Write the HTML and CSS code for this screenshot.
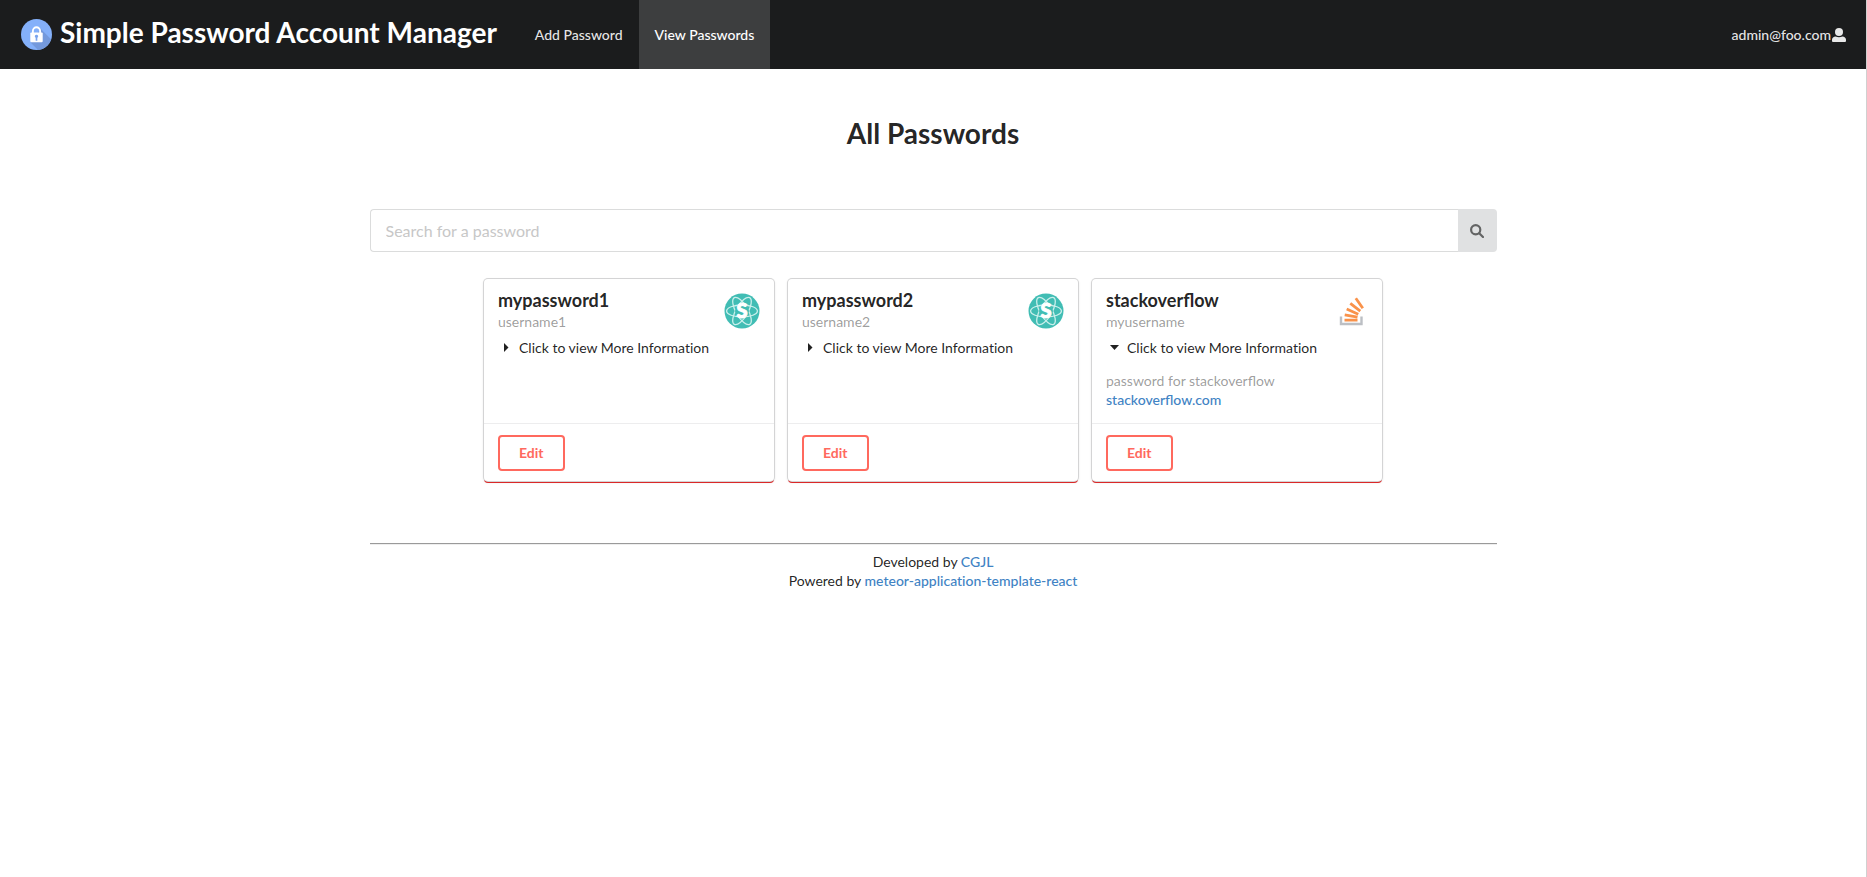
FILE: index.html
```html
<!DOCTYPE html>
<html lang="en">
<head>
<meta charset="utf-8">
<title>Simple Password Account Manager</title>
<link rel="stylesheet" href="styles.css">
</head>
<body>
<nav class="navbar">
  <a class="brand" href="#">
    <svg class="brand-logo" viewBox="0 0 30 30" aria-hidden="true">
      <defs><clipPath id="disc"><circle cx="15" cy="15" r="15"/></clipPath></defs>
      <circle cx="15" cy="15" r="15" fill="#84b0fa"/>
      <path d="M19 9.500 32 22.500V32H18.500L9.500 23z" fill="#7499dc" clip-path="url(#disc)"/>
      <path d="M11.500 14v-2.500a3.500 3.500 0 0 1 7 0V14" fill="none" stroke="#fff" stroke-width="1.800"/>
      <rect x="9" y="13" width="12" height="9.500" rx="1" fill="#fff"/>
      <path d="M15 15.200a1.600 1.600 0 0 1 .8 3v2.800h-1.600v-2.800a1.600 1.600 0 0 1 .8-3z" fill="#7aa4ee"/>
    </svg>
    <h1 class="brand-name">Simple Password Account Manager</h1>
  </a>
  <a class="nav-item" href="#">Add Password</a>
  <a class="nav-item active" href="#">View Passwords</a>
  <a class="nav-item user" href="#">admin@foo.com<svg class="user-icon" viewBox="0 0 14 14" aria-hidden="true"><circle cx="7" cy="4" r="4"/><path d="M0 13v-1.200C0 9.800 1.600 8.500 3.600 8.500c1 .5 2.100.8 3.400.8s2.400-.3 3.400-.8c2 0 3.600 1.300 3.600 3.300V13a1 1 0 0 1-1 1H1a1 1 0 0 1-1-1z"/></svg></a>
</nav>
<main class="container">
  <h2 class="page-title">All Passwords</h2>
  <form class="search">
    <input class="search-input" type="text" placeholder="Search for a password" aria-label="Search for a password">
    <button class="search-button" type="button" aria-label="Search">
      <svg class="search-icon" viewBox="0 0 14 14" aria-hidden="true"><circle cx="5.700" cy="5.700" r="4.600"/><path d="M9.200 9.200 13 13"/></svg>
    </button>
  </form>
  <section class="cards">
    <article class="card">
      <div class="content">
        <div class="head">
          <div>
            <h3 class="name">mypassword1</h3>
            <p class="meta">username1</p>
          </div>
          <svg class="logo" viewBox="0 0 36 36" aria-hidden="true">
            <circle cx="18" cy="18" r="17.500" fill="#41bdb4"/>
            <g fill="none" stroke="#c9efeb" stroke-width="1.300">
              <ellipse cx="18" cy="18" rx="15.400" ry="6"/>
              <ellipse cx="18" cy="18" rx="15.400" ry="6" transform="rotate(60 18 18)"/>
              <ellipse cx="18" cy="18" rx="15.400" ry="6" transform="rotate(120 18 18)"/>
            </g>
            <circle cx="18" cy="18" r="7" fill="#41bdb4"/>
            <text x="18" y="25" text-anchor="middle" class="logo-letter">S</text>
          </svg>
        </div>
        <button class="toggle" type="button"><svg class="caret" viewBox="0 0 14 14" aria-hidden="true"><path d="M6 2v9l4.500-4.500z"/></svg>Click to view More Information</button>
      </div>
      <div class="extra"><button class="edit" type="button">Edit</button></div>
    </article>
    <article class="card">
      <div class="content">
        <div class="head">
          <div>
            <h3 class="name">mypassword2</h3>
            <p class="meta">username2</p>
          </div>
          <svg class="logo" viewBox="0 0 36 36" aria-hidden="true">
            <circle cx="18" cy="18" r="17.500" fill="#41bdb4"/>
            <g fill="none" stroke="#c9efeb" stroke-width="1.300">
              <ellipse cx="18" cy="18" rx="15.400" ry="6"/>
              <ellipse cx="18" cy="18" rx="15.400" ry="6" transform="rotate(60 18 18)"/>
              <ellipse cx="18" cy="18" rx="15.400" ry="6" transform="rotate(120 18 18)"/>
            </g>
            <circle cx="18" cy="18" r="7" fill="#41bdb4"/>
            <text x="18" y="25" text-anchor="middle" class="logo-letter">S</text>
          </svg>
        </div>
        <button class="toggle" type="button"><svg class="caret" viewBox="0 0 14 14" aria-hidden="true"><path d="M6 2v9l4.500-4.500z"/></svg>Click to view More Information</button>
      </div>
      <div class="extra"><button class="edit" type="button">Edit</button></div>
    </article>
    <article class="card">
      <div class="content">
        <div class="head">
          <div>
            <h3 class="name">stackoverflow</h3>
            <p class="meta">myusername</p>
          </div>
          <svg class="logo" viewBox="0 0 36 36" aria-hidden="true">
            <path d="M9 23.500v7.500h20.500v-7.500" fill="none" stroke="#bcbfc4" stroke-width="2.400"/>
            <path d="M12.500 27.200h13M12.700 21.800l12.800 2.400M14.700 16l11.600 5.200M18.300 10.300l10 7.800M23.800 5.300l7 10" fill="none" stroke="#f9924a" stroke-width="2.800"/>
          </svg>
        </div>
        <button class="toggle" type="button"><svg class="caret" viewBox="0 0 14 14" aria-hidden="true"><path d="M4 4h9L8.500 9z"/></svg>Click to view More Information</button>
        <div class="details">
          <p class="meta">password for stackoverflow</p>
          <a class="link" href="#">stackoverflow.com</a>
        </div>
      </div>
      <div class="extra"><button class="edit" type="button">Edit</button></div>
    </article>
  </section>
  <footer class="footer">
    <p>Developed by <a class="link" href="#">CGJL</a></p>
    <p>Powered by <a class="link" href="#">meteor-application-template-react</a></p>
  </footer>
</main>
</body>
</html>
```
FILE: styles.css
```css
* { box-sizing: border-box; }
html { background: #fff; }
body {
  margin: 0;
  min-height: 100vh;
  border-right: 1px solid #d0d0d0;
  font: 14px/19px Lato, "Liberation Sans", sans-serif;
  color: rgba(0, 0, 0, .87);
}
h1, h2, h3, p { margin: 0; }
a { text-decoration: none; }
button, input { font: inherit; color: inherit; }

.navbar { display: flex; height: 69px; background: #1b1c1d; }
.brand { display: flex; align-items: center; gap: 8px; padding: 0 22px 0 21px; color: #fff; }
.brand-logo { width: 31px; height: 31px; }
.brand-name { font-size: 28px; line-height: 36px; padding-bottom: 5px; }
.nav-item { display: flex; align-items: center; padding: 0 16px; font-weight: 500; color: rgba(255, 255, 255, .9); }
.nav-item.active { background: #3d3e3f; color: #fff; }
.user { margin-left: auto; padding-right: 20px; }
.user-icon { width: 14px; height: 14px; margin-left: 1px; fill: #e8e8e8; }

.container { width: 1127px; max-width: 100%; margin: 0 auto; }
.page-title { padding: 45px 0 57px; text-align: center; font-size: 28px; line-height: 38px; }

.search { display: flex; height: 43px; }
.search-input {
  flex: 1;
  min-width: 0;
  padding: 0 15px;
  border: 1px solid #dbdcdc;
  border-right: 0;
  border-radius: 4px 0 0 4px;
  font-size: 16px;
  outline: 0;
}
.search-input::placeholder { color: #c7c7c7; opacity: 1; }
.search-button {
  display: flex;
  align-items: center;
  justify-content: center;
  width: 39px;
  padding: 0;
  border: 0;
  border-radius: 0 4px 4px 0;
  background: #e0e1e2;
}
.search-icon { width: 14px; height: 14px; fill: none; stroke: #636464; stroke-width: 2.2; stroke-linecap: round; }

.cards { display: flex; flex-wrap: wrap; justify-content: center; gap: 14px; padding: 27px 0 62px; }
.card {
  display: flex;
  flex-direction: column;
  width: 290px;
  border-radius: 4px;
  background: #fff;
  box-shadow: 0 0 0 1px #d4d4d5, 0 2px 0 0 #db2828, 0 1px 3px 0 #d4d4d5;
}
.content { flex: 1; padding: 10px 14px 14px; }
.head { display: flex; justify-content: space-between; }
.name { font-size: 18px; line-height: 23px; }
.meta { color: rgba(0, 0, 0, .4); }
.logo { width: 36px; height: 36px; margin-top: 4px; }
.logo-letter { font: 900 20px Lato, sans-serif; fill: #fff; stroke: #fff; stroke-width: 1px; }
.toggle {
  display: flex;
  align-items: center;
  gap: 7px;
  margin-top: 7px;
  padding: 0;
  border: 0;
  background: none;
  font-variant-ligatures: none;
}
.caret { width: 14px; height: 14px; fill: currentColor; }
.details { margin-top: 14px; }
.link { color: #4183c4; font-weight: 500; }
.extra { padding: 11px 14px 10px; border-top: 1px solid #ededee; }
.edit {
  display: block;
  height: 36px;
  padding: 0 19px 2px;
  border: 2px solid #ff695e;
  border-radius: 4px;
  background: none;
  color: #ff695e;
  font-weight: 700;
}

.footer {
  padding-top: 8px;
  border-top: 1px solid #9a9a9a;
  box-shadow: inset 0 1px #eee;
  text-align: center;
  font-variant-ligatures: none;
}
```
